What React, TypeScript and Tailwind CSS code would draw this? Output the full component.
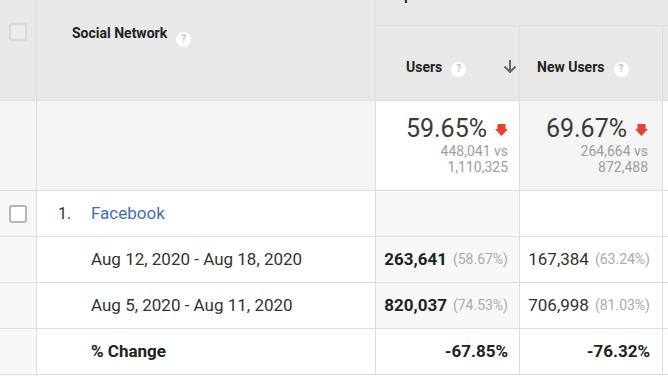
import React from "react";

const B = "border-[#dedede]";

function Help() {
  return (
    <span className="inline-flex h-[15px] w-[15px] items-center justify-center rounded-full bg-white text-[10px] font-bold leading-none text-[#c4c4c4]">
      ?
    </span>
  );
}

function RedDown() {
  return (
    <svg width="13" height="12" viewBox="0 0 13 12" className="ml-[8px] mt-[9px]">
      <path d="M2.5 0H10.5V5H13L6.5 12L0 5H2.5Z" fill="#e8402f" />
    </svg>
  );
}

function Check({ light }: { light?: boolean }) {
  return (
    <span
      className={
        light
          ? "block h-[18px] w-[18px] rounded-[3px] border-2 border-[#d9d9d9] bg-[#ebebeb]"
          : "block h-[18px] w-[18px] rounded-[3px] border-2 border-[#b5b5b5] bg-white"
      }
    />
  );
}

export default function App() {
  return (
    <div
      className="h-[376px] w-[668px] overflow-hidden bg-white text-[#333]"
      style={{ fontFamily: "Roboto, 'Liberation Sans', Arial, sans-serif" }}
    >
      <div className="grid grid-cols-[37px_339px_144px_143px_1fr] grid-rows-[26px_75px_90px_46px_46px_46px_46px]">
        {/* header */}
        <div className={`row-span-2 flex justify-center border-r border-b ${B} bg-[#e8e8e8] pt-[23px]`}>
          <Check light />
        </div>
        <div className={`row-span-2 flex items-start border-r border-b ${B} bg-[#e8e8e8] pl-[35px] pt-[24px]`}>
          <span className="text-[14px] font-bold leading-[18px] text-[#222]">Social Network</span>
          <span className="ml-[9px] mt-[1px]">
            <Help />
          </span>
        </div>
        <div className={`col-span-3 overflow-hidden border-b ${B} bg-[#e8e8e8] pl-[7px]`}>
          <div className="-mt-[13px] text-[14px] font-bold leading-[16px] text-[#222]">Acquisition</div>
        </div>
        <div className={`flex items-center border-r border-b ${B} bg-[#e8e8e8] pl-[30px] pr-[2px] pt-[8px]`}>
          <span className="text-[14px] font-bold leading-[18px] text-[#222]">Users</span>
          <span className="ml-[9px]">
            <Help />
          </span>
          <svg width="14" height="13" viewBox="0 0 14 13" className="ml-auto -mt-[2px]">
            <path d="M7 0V11.5M1.5 6.5L7 12L12.5 6.5" stroke="#666" strokeWidth="2" fill="none" />
          </svg>
        </div>
        <div className={`flex items-center border-r border-b ${B} bg-[#e8e8e8] pl-[17px] pt-[8px]`}>
          <span className="text-[14px] font-bold leading-[18px] text-[#222]">New Users</span>
          <span className="ml-[9px]">
            <Help />
          </span>
        </div>
        <div className={`border-b ${B} bg-[#e8e8e8]`} />

        {/* summary */}
        <div className={`border-r border-b ${B} bg-[#f5f5f5]`} />
        <div className={`border-r border-b ${B} bg-[#f5f5f5]`} />
        <div className={`flex flex-col items-end border-r border-b ${B} bg-white pr-[11px] pt-[14px]`}>
          <div className="flex items-start">
            <span className="text-[25px] leading-[28px] text-[#3a3a3a]">59.65%</span>
            <RedDown />
          </div>
          <span className="text-right text-[14px] leading-[16px] text-[#9e9e9e]">
            448,041 vs
            <br />
            1,110,325
          </span>
        </div>
        <div className={`flex flex-col items-end border-r border-b ${B} bg-[#f5f5f5] pr-[14px] pt-[14px]`}>
          <div className="flex items-start">
            <span className="text-[25px] leading-[28px] text-[#3a3a3a]">69.67%</span>
            <RedDown />
          </div>
          <span className="text-right text-[14px] leading-[16px] text-[#9e9e9e]">
            264,664 vs
            <br />
            872,488
          </span>
        </div>
        <div className={`border-b ${B} bg-white`} />

        {/* Facebook row */}
        <div className={`flex items-center justify-center border-r border-b ${B} bg-[#f8f8f8]`}>
          <Check />
        </div>
        <div className={`flex items-center border-r border-b ${B} bg-white pl-[21px]`}>
          <span className="w-[33px] text-[16px] text-[#333]">1.</span>
          <span className="text-[17px] text-[#3d6fb5]">Facebook</span>
        </div>
        <div className={`border-r border-b ${B} bg-[#f8f8f8]`} />
        <div className={`border-r border-b ${B} bg-white`} />
        <div className={`border-b ${B} bg-white`} />

        {/* date row 1 */}
        <div className={`border-r border-b ${B} bg-[#f8f8f8]`} />
        <div className={`flex items-center border-r border-b ${B} bg-white pl-[54px]`}>
          <span className="text-[17px] text-[#333]">Aug 12, 2020 - Aug 18, 2020</span>
        </div>
        <div className={`flex items-center justify-end border-r border-b ${B} bg-[#f8f8f8] pr-[11px]`}>
          <span className="text-[17px] font-bold text-[#222]">263,641</span>
          <span className="ml-[6px] text-[14px] text-[#aaa]">(58.67%)</span>
        </div>
        <div className={`flex items-center justify-end border-r border-b ${B} bg-white pr-[12px]`}>
          <span className="text-[17px] text-[#333]">167,384</span>
          <span className="ml-[6px] text-[14px] text-[#aaa]">(63.24%)</span>
        </div>
        <div className={`border-b ${B} bg-white`} />

        {/* date row 2 */}
        <div className={`border-r border-b ${B} bg-[#f8f8f8]`} />
        <div className={`flex items-center border-r border-b ${B} bg-white pl-[54px]`}>
          <span className="text-[17px] text-[#333]">Aug 5, 2020 - Aug 11, 2020</span>
        </div>
        <div className={`flex items-center justify-end border-r border-b ${B} bg-[#f8f8f8] pr-[11px]`}>
          <span className="text-[17px] font-bold text-[#222]">820,037</span>
          <span className="ml-[6px] text-[14px] text-[#aaa]">(74.53%)</span>
        </div>
        <div className={`flex items-center justify-end border-r border-b ${B} bg-white pr-[12px]`}>
          <span className="text-[17px] text-[#333]">706,998</span>
          <span className="ml-[6px] text-[14px] text-[#aaa]">(81.03%)</span>
        </div>
        <div className={`border-b ${B} bg-white`} />

        {/* % change */}
        <div className={`border-r border-b ${B} bg-[#f8f8f8]`} />
        <div className={`flex items-center border-r border-b ${B} bg-white pl-[54px]`}>
          <span className="text-[17px] font-bold text-[#222]">% Change</span>
        </div>
        <div className={`flex items-center justify-end border-r border-b ${B} bg-white pr-[11px]`}>
          <span className="text-[17px] font-bold text-[#222]">-67.85%</span>
        </div>
        <div className={`flex items-center justify-end border-r border-b ${B} bg-white pr-[12px]`}>
          <span className="text-[17px] font-bold text-[#222]">-76.32%</span>
        </div>
        <div className={`border-b ${B} bg-white`} />
      </div>
    </div>
  );
}
